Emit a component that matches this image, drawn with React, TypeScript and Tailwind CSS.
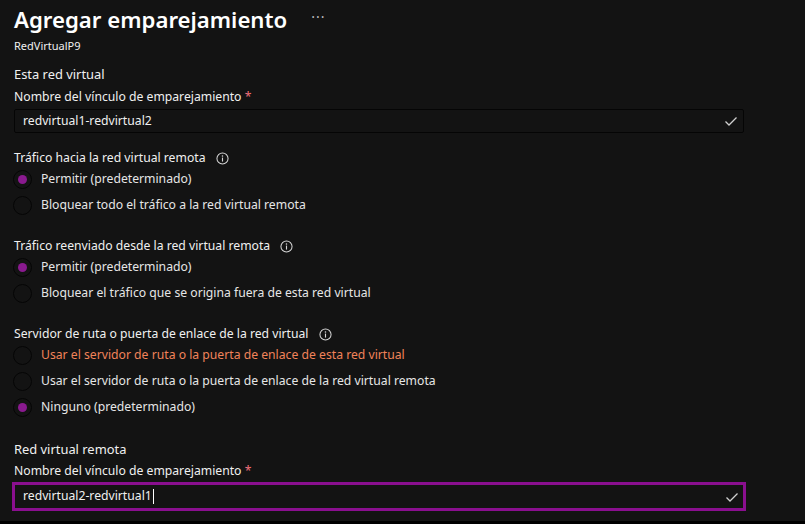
import React from 'react';

function InfoIcon() {
  return (
    <svg width="13" height="13" viewBox="0 0 14 14" className="shrink-0">
      <circle cx="7" cy="7" r="6" fill="none" stroke="#d6d6d6" strokeWidth="1.1" />
      <circle cx="7" cy="4.3" r="0.85" fill="#d6d6d6" />
      <rect x="6.4" y="6" width="1.2" height="4.3" fill="#d6d6d6" />
    </svg>
  );
}

function Check() {
  return (
    <svg width="14" height="14" viewBox="0 0 14 14">
      <path d="M1.5 7.5 L5 11 L12.5 3.5" fill="none" stroke="#d0d0d0" strokeWidth="1.3" />
    </svg>
  );
}

function Radio({ label, checked, warn }: { label: string; checked?: boolean; warn?: boolean }) {
  return (
    <div className="flex items-center h-[26px]">
      <span className="w-[19px] h-[19px] rounded-full border border-[#050505] flex items-center justify-center ml-[-1px]">
        {checked && <span className="w-[9px] h-[9px] rounded-full bg-[#8a1a8f]" />}
      </span>
      <span className={`ml-[9px] text-[12.2px] ${warn ? 'text-[#f1835a]' : 'text-[#e6e6e6]'}`}>{label}</span>
    </div>
  );
}

function Group({ title, options }: { title: string; options: { label: string; checked?: boolean; warn?: boolean }[] }) {
  return (
    <div>
      <div className="flex items-center gap-[10px] h-[16px] text-[12.2px] text-[#f0f0f0]">
        <span>{title}</span>
        <InfoIcon />
      </div>
      <div>
        {options.map((o) => (
          <Radio key={o.label} {...o} />
        ))}
      </div>
    </div>
  );
}

export default function App() {
  return (
    <div
      className="w-[805px] h-[524px] bg-[#131313] text-white overflow-hidden border-b-[3px] border-[#000]"
      style={{ fontFamily: '"Noto Sans", "Open Sans", sans-serif' }}
    >
      <div className="pl-[14px] pt-[2px]">
        <div className="flex items-center">
          <h1 className="text-[22.2px] font-semibold leading-[36px]">Agregar emparejamiento</h1>
          <span className="ml-[24px] text-[#bdbdbd] text-[14px] leading-none mb-[6px] tracking-[1px]">···</span>
        </div>
        <div className="text-[11px] leading-[16px] text-[#f0f0f0]">RedVirtualP9</div>

        <div className="mt-[10px] text-[12.9px] leading-[20px] text-[#f0f0f0]">Esta red virtual</div>
        <div className="mt-[3px] text-[12.2px] leading-[20px] text-[#f0f0f0]">
          Nombre del vínculo de emparejamiento <span className="text-[#f1707b]">*</span>
        </div>
        <div className="mt-[2px] w-[730px] h-[24px] border border-[#050505] rounded-[2px] flex items-center justify-between pl-[8px] pr-[5px]">
          <span className="text-[12.2px] text-[#f0f0f0]">redvirtual1-redvirtual2</span>
          <Check />
        </div>

        <div className="mt-[17px]">
          <Group
            title="Tráfico hacia la red virtual remota"
            options={[
              { label: 'Permitir (predeterminado)', checked: true },
              { label: 'Bloquear todo el tráfico a la red virtual remota' },
            ]}
          />
        </div>
        <div className="mt-[20px]">
          <Group
            title="Tráfico reenviado desde la red virtual remota"
            options={[
              { label: 'Permitir (predeterminado)', checked: true },
              { label: 'Bloquear el tráfico que se origina fuera de esta red virtual' },
            ]}
          />
        </div>
        <div className="mt-[20px]">
          <Group
            title="Servidor de ruta o puerta de enlace de la red virtual"
            options={[
              { label: 'Usar el servidor de ruta o la puerta de enlace de esta red virtual', warn: true },
              { label: 'Usar el servidor de ruta o la puerta de enlace de la red virtual remota' },
              { label: 'Ninguno (predeterminado)', checked: true },
            ]}
          />
        </div>

        <div className="mt-[19px] text-[12.9px] leading-[20px] text-[#f0f0f0]">Red virtual remota</div>
        <div className="mt-[2px] text-[12.2px] leading-[20px] text-[#f0f0f0]">
          Nombre del vínculo de emparejamiento <span className="text-[#f1707b]">*</span>
        </div>
        <div className="mt-[1px] ml-[-2px] w-[734px] h-[29px] border-[3px] border-[#8a0f8f] flex items-center justify-between pl-[8px] pr-[4px]">
          <span className="text-[12.2px] text-[#f0f0f0] flex items-center">
            redvirtual2-redvirtual1<span className="inline-block w-px h-[15px] bg-white ml-[1px]" />
          </span>
          <Check />
        </div>
      </div>
    </div>
  );
}
